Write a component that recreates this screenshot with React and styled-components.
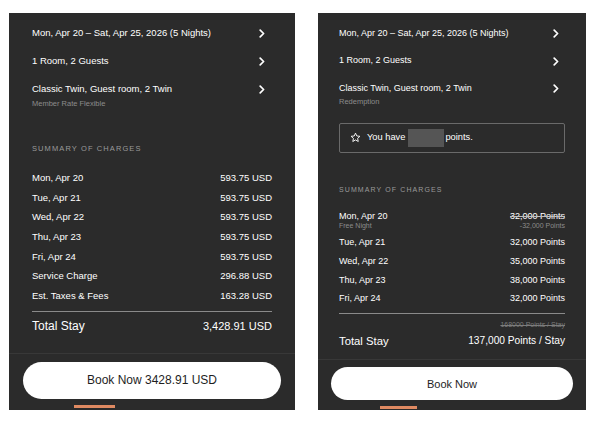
import { createGlobalStyle, styled } from 'styled-components';

const GlobalStyle = createGlobalStyle`
  html, body {
    margin: 0;
    padding: 0;
    background: #ffffff;
  }
  body {
    font-family: 'Liberation Sans', Arial, sans-serif;
    -webkit-font-smoothing: antialiased;
  }
`;

const Page = styled.div`
  display: flex;
  gap: 23px;
  padding: 13px 0 0 9px;
  width: 600px;
  height: 425px;
  box-sizing: border-box;
`;

const Panel = styled.div`
  width: ${(p) => p.$width}px;
  height: 397px;
  background: #2b2b2b;
  color: #ffffff;
  display: flex;
  flex-direction: column;
  overflow: hidden;
  flex-shrink: 0;
`;

const Content = styled.div`
  padding: ${(p) => p.$top}px ${(p) => p.$side}px 0;
  display: flex;
  flex-direction: column;
`;

const NavList = styled.div`
  display: flex;
  flex-direction: column;
  margin-right: ${(p) => p.$extra}px;
`;

const NavRow = styled.div`
  display: flex;
  align-items: flex-start;
  justify-content: space-between;
  padding: 8px 0;
`;

const NavText = styled.div`
  display: flex;
  flex-direction: column;
`;

const NavTitle = styled.div`
  font-size: ${(p) => p.$size}px;
  line-height: ${(p) => p.$line}px;
`;

const NavSub = styled.div`
  font-size: 7.5px;
  line-height: ${(p) => p.$line}px;
  margin-top: ${(p) => p.$gap}px;
  color: #8c8c8c;
`;

const Chevron = styled.svg`
  width: 6px;
  height: 9px;
  margin-top: ${(p) => p.$offset}px;
  flex-shrink: 0;
`;

const PointsBox = styled.div`
  margin-top: 8.5px;
  height: 30px;
  box-sizing: border-box;
  border: 1px solid #6a6a6a;
  border-radius: 2px;
  display: flex;
  align-items: center;
  padding-left: 10px;
  gap: 6px;
  font-size: 9.3px;
`;

const Redacted = styled.span`
  display: inline-block;
  width: 36px;
  height: 18px;
  background: #555555;
  margin: 0 1px 0 3px;
  vertical-align: middle;
`;

const SectionTitle = styled.div`
  margin-top: ${(p) => p.$gap}px;
  font-size: ${(p) => p.$size}px;
  line-height: 10px;
  letter-spacing: 1.1px;
  color: #9a9a9a;
  text-transform: uppercase;
`;

const Charges = styled.div`
  margin-top: ${(p) => p.$gap}px;
  display: flex;
  flex-direction: column;
`;

const ChargeRow = styled.div`
  display: flex;
  justify-content: space-between;
  align-items: flex-start;
  padding: ${(p) => p.$pad}px 0;
  font-size: ${(p) => p.$size}px;
  line-height: ${(p) => p.$line}px;
`;

const Stack = styled.div`
  display: flex;
  flex-direction: column;
  align-items: ${(p) => (p.$right ? 'flex-end' : 'flex-start')};
`;

const Struck = styled.span`
  text-decoration: line-through;
  text-decoration-color: #bdbdbd;
`;

const Minor = styled.div`
  font-size: 7px;
  line-height: 8px;
  color: #8c8c8c;
`;

const Divider = styled.div`
  margin-top: ${(p) => p.$gap}px;
  height: 1px;
  background: #8a8a8a;
`;

const OldTotal = styled.div`
  margin-top: 6.5px;
  text-align: right;
  font-size: 7px;
  line-height: 9px;
  color: #7c7c7c;
  text-decoration: line-through;
`;

const TotalRow = styled.div`
  margin-top: ${(p) => p.$gap}px;
  display: flex;
  justify-content: space-between;
  align-items: center;
  height: ${(p) => p.$line}px;
`;

const TotalLabel = styled.span`
  font-size: ${(p) => p.$size}px;
`;

const TotalValue = styled.span`
  font-size: ${(p) => p.$size}px;
`;

const Footer = styled.div`
  margin-top: ${(p) => p.$gap}px;
  border-top: 1px solid #383838;
  padding: ${(p) => p.$pad}px ${(p) => p.$side}px 0;
  display: flex;
  flex-direction: column;
`;

const BookButton = styled.button`
  height: ${(p) => p.$height}px;
  border: none;
  border-radius: 20px;
  background: #ffffff;
  color: #1e1e1e;
  font-family: 'Liberation Sans', Arial, sans-serif;
  font-size: ${(p) => p.$size}px;
  cursor: pointer;
`;

const TabMark = styled.div`
  margin-top: 6px;
  margin-left: ${(p) => p.$left}px;
  width: ${(p) => p.$width}px;
  height: 3px;
  background: #e08a62;
`;

function ChevronIcon({ offset }) {
  return (
    <Chevron $offset={offset} viewBox="0 0 6 9">
      <path
        d="M1.2 1.2 L4.6 4.5 L1.2 7.8"
        fill="none"
        stroke="#ffffff"
        strokeWidth="1.7"
        strokeLinecap="round"
        strokeLinejoin="round"
      />
    </Chevron>
  );
}

function StarIcon() {
  return (
    <svg width="11" height="11" viewBox="0 0 24 24">
      <path
        d="M12 2.5l2.9 6.2 6.8.7-5.1 4.6 1.4 6.7L12 17.3l-5.9 3.4 1.4-6.7-5.1-4.6 6.8-.7z"
        fill="none"
        stroke="#ffffff"
        strokeWidth="2"
        strokeLinejoin="round"
      />
    </svg>
  );
}

const cashNights = [
  ['Mon, Apr 20', '593.75 USD'],
  ['Tue, Apr 21', '593.75 USD'],
  ['Wed, Apr 22', '593.75 USD'],
  ['Thu, Apr 23', '593.75 USD'],
  ['Fri, Apr 24', '593.75 USD'],
  ['Service Charge', '296.88 USD'],
  ['Est. Taxes & Fees', '163.28 USD'],
];

const pointNights = [
  ['Tue, Apr 21', '32,000 Points'],
  ['Wed, Apr 22', '35,000 Points'],
  ['Thu, Apr 23', '38,000 Points'],
  ['Fri, Apr 24', '32,000 Points'],
];

function CashPanel() {
  return (
    <Panel $width={286}>
      <Content $top={6} $side={23}>
        <NavList $extra={7}>
          <NavRow>
            <NavTitle $size={9.5} $line={12}>
              Mon, Apr 20 – Sat, Apr 25, 2026 (5 Nights)
            </NavTitle>
            <ChevronIcon offset={1.5} />
          </NavRow>
          <NavRow>
            <NavTitle $size={9.5} $line={12}>1 Room, 2 Guests</NavTitle>
            <ChevronIcon offset={1.5} />
          </NavRow>
          <NavRow>
            <NavText>
              <NavTitle $size={9.5} $line={12}>
                Classic Twin, Guest room, 2 Twin
              </NavTitle>
              <NavSub $line={10} $gap={4}>Member Rate Flexible</NavSub>
            </NavText>
            <ChevronIcon offset={1.5} />
          </NavRow>
        </NavList>

        <SectionTitle $gap={27} $size={7.5}>Summary of Charges</SectionTitle>

        <Charges $gap={14}>
          {cashNights.map(([label, amount]) => (
            <ChargeRow key={label} $pad={0} $size={9.5} $line={19.67}>
              <span>{label}</span>
              <span>{amount}</span>
            </ChargeRow>
          ))}
        </Charges>

        <Divider $gap={5} />

        <TotalRow $gap={4} $line={20}>
          <TotalLabel $size={12}>Total Stay</TotalLabel>
          <TotalValue $size={11}>3,428.91 USD</TotalValue>
        </TotalRow>
      </Content>

      <Footer $gap={17} $pad={8} $side={14}>
        <BookButton $height={37} $size={12}>
          Book Now 3428.91 USD
        </BookButton>
        <TabMark $left={51} $width={41} />
      </Footer>
    </Panel>
  );
}

function PointsPanel() {
  return (
    <Panel $width={268}>
      <Content $top={6.5} $side={21}>
        <NavList $extra={6}>
          <NavRow>
            <NavTitle $size={9} $line={11.5}>
              Mon, Apr 20 – Sat, Apr 25, 2026 (5 Nights)
            </NavTitle>
            <ChevronIcon offset={1.5} />
          </NavRow>
          <NavRow>
            <NavTitle $size={9} $line={11.5}>1 Room, 2 Guests</NavTitle>
            <ChevronIcon offset={1.5} />
          </NavRow>
          <NavRow>
            <NavText>
              <NavTitle $size={9} $line={11.5}>
                Classic Twin, Guest room, 2 Twin
              </NavTitle>
              <NavSub $line={9} $gap={3}>Redemption</NavSub>
            </NavText>
            <ChevronIcon offset={1.5} />
          </NavRow>
        </NavList>

        <PointsBox>
          <StarIcon />
          <span>
            You have<Redacted />points.
          </span>
        </PointsBox>

        <SectionTitle $gap={32} $size={7}>Summary of Charges</SectionTitle>

        <Charges $gap={12.67}>
          <ChargeRow $pad={3.5} $size={9} $line={11.67}>
            <Stack>
              <span>Mon, Apr 20</span>
              <Minor>Free Night</Minor>
            </Stack>
            <Stack $right>
              <Struck>32,000 Points</Struck>
              <Minor>-32,000 Points</Minor>
            </Stack>
          </ChargeRow>
          {pointNights.map(([label, amount]) => (
            <ChargeRow key={label} $pad={3.5} $size={9} $line={11.67}>
              <span>{label}</span>
              <span>{amount}</span>
            </ChargeRow>
          ))}
        </Charges>

        <Divider $gap={4} />

        <OldTotal>168000 Points / Stay</OldTotal>

        <TotalRow $gap={3.5} $line={16}>
          <TotalLabel $size={11.3}>Total Stay</TotalLabel>
          <TotalValue $size={10.2}>137,000 Points / Stay</TotalValue>
        </TotalRow>
      </Content>

      <Footer $gap={10} $pad={7.5} $side={13}>
        <BookButton $height={33} $size={11}>
          Book Now
        </BookButton>
        <TabMark $left={49} $width={37} />
      </Footer>
    </Panel>
  );
}

export default function App() {
  return (
    <>
      <GlobalStyle />
      <Page>
        <CashPanel />
        <PointsPanel />
      </Page>
    </>
  );
}
